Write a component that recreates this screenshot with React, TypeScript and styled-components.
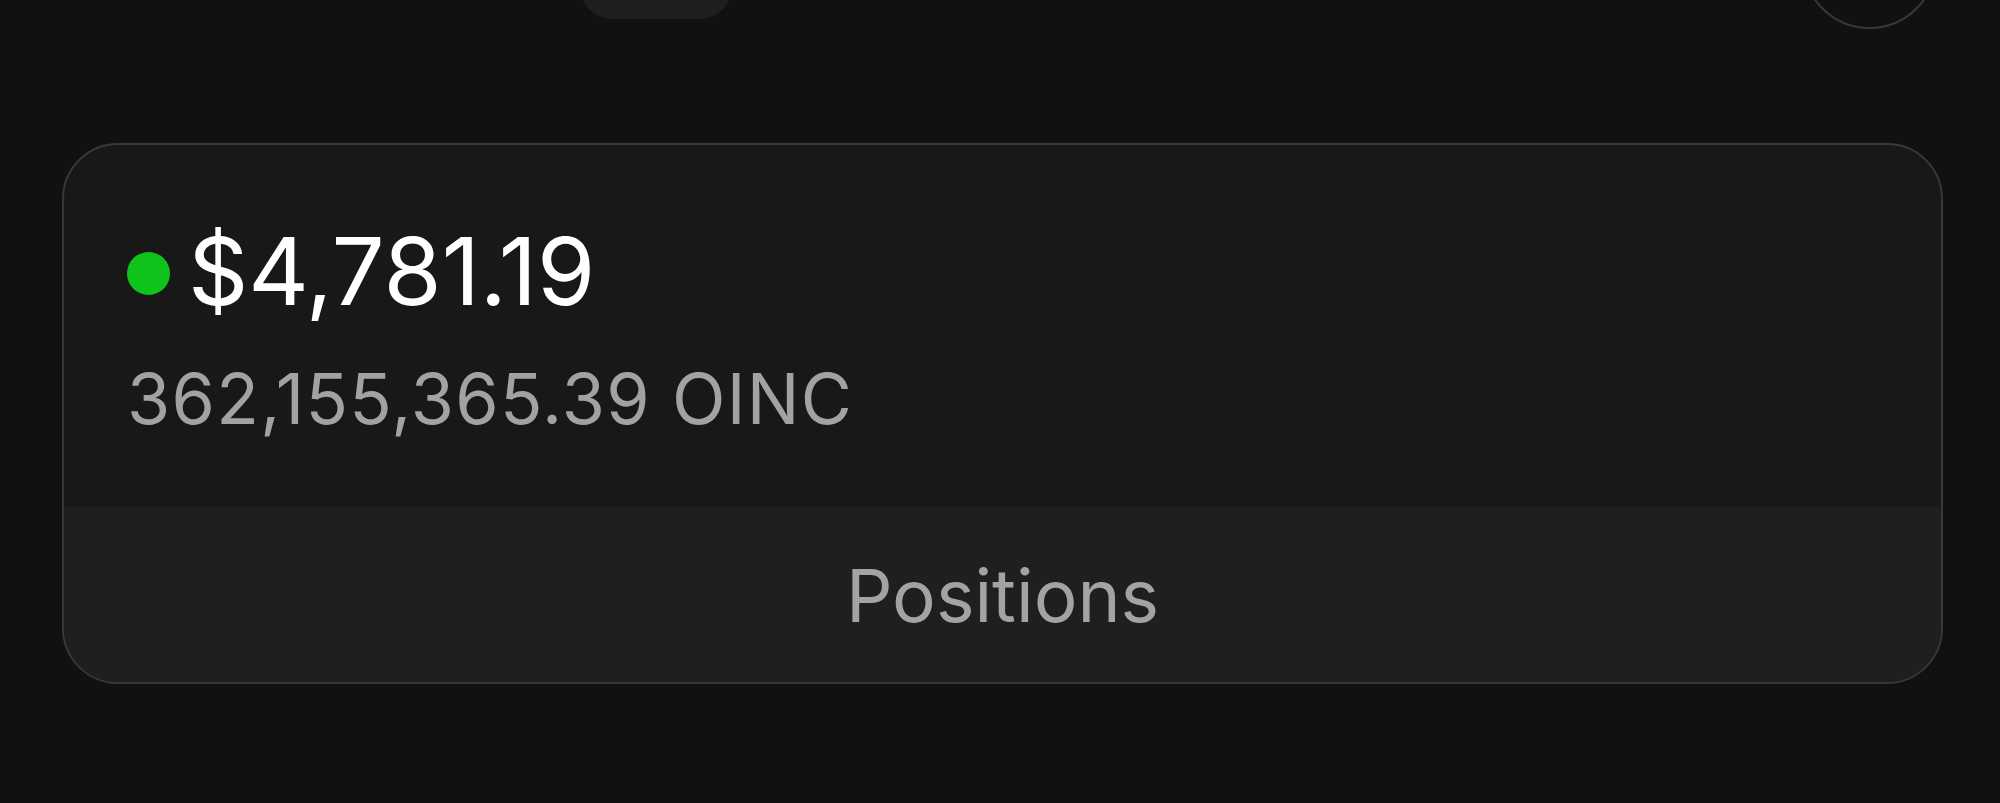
import React from "react";
import styled, { createGlobalStyle } from "styled-components";

const GlobalStyle = createGlobalStyle`
  html, body {
    margin: 0;
    padding: 0;
    background: #111111;
    overflow: hidden;
  }
  body {
    font-family: Inter, "Noto Sans", "Liberation Sans", sans-serif;
    -webkit-font-smoothing: antialiased;
  }
`;

const Page = styled.div`
  display: flex;
  flex-direction: column;
  padding: 0 57px 0 62px;
  height: 803px;
  box-sizing: border-box;
`;

const Header = styled.div`
  display: flex;
  justify-content: space-between;
  align-items: flex-start;
  height: 143px;
  padding: 0 6px 0 518px;
`;

const PillButton = styled.div`
  width: 152px;
  height: 100px;
  margin-top: -81px;
  border-radius: 32px;
  background: #1f1f1f;
`;

const CircleButton = styled.div`
  width: 135px;
  height: 135px;
  margin-top: -106px;
  border-radius: 50%;
  border: 2px solid #383838;
  box-sizing: border-box;
`;

const Card = styled.div`
  display: flex;
  flex-direction: column;
  border: 2px solid #383838;
  border-radius: 56px;
  overflow: hidden;
  background: #181818;
`;

const Summary = styled.div`
  display: flex;
  flex-direction: column;
  gap: 46px;
  padding: 79px 64px 73px 63px;
`;

const ValueRow = styled.div`
  display: flex;
  align-items: center;
  gap: 18px;
`;

const StatusDot = styled.span`
  width: 43px;
  height: 43px;
  border-radius: 50%;
  background: #10c31a;
  flex: none;
  margin-top: 4px;
`;

const Amount = styled.div`
  font-size: 94px;
  line-height: 94px;
  color: #ffffff;
  font-weight: 400;
  letter-spacing: 0px;
`;

const Balance = styled.div`
  font-size: 70px;
  line-height: 70px;
  color: #a2a2a2;
  font-weight: 400;
  letter-spacing: 1.3px;
`;

const Footer = styled.div`
  display: flex;
  align-items: center;
  justify-content: center;
  height: 175px;
  background: #1f1f1f;
`;

const FooterLabel = styled.span`
  font-size: 73px;
  line-height: 73px;
  color: #a3a3a3;
  font-weight: 400;
  margin-top: 2px;
`;

export default function App() {
  return (
    <>
      <GlobalStyle />
      <Page>
        <Header>
          <PillButton />
          <CircleButton />
        </Header>
        <Card>
          <Summary>
            <ValueRow>
              <StatusDot />
              <Amount>$4,781.19</Amount>
            </ValueRow>
            <Balance>362,155,365.39 OINC</Balance>
          </Summary>
          <Footer>
            <FooterLabel>Positions</FooterLabel>
          </Footer>
        </Card>
      </Page>
    </>
  );
}
